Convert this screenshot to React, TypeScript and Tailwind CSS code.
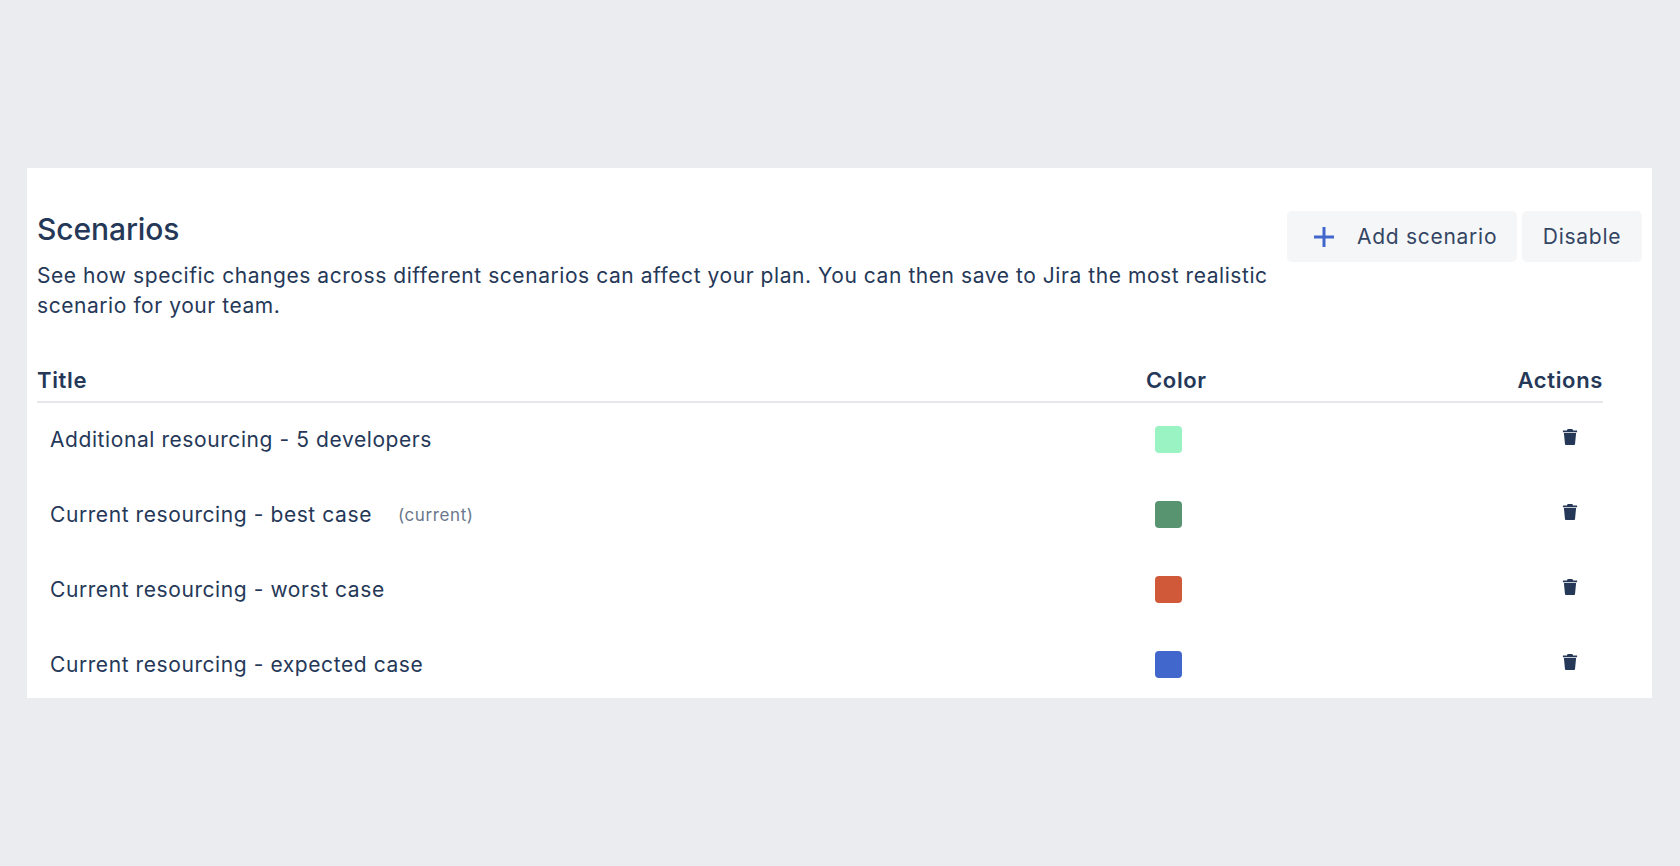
const rows = [
  { title: "Additional resourcing - 5 developers", color: "bg-[#99f3c3]" },
  { title: "Current resourcing - best case", color: "bg-[#57946f]", current: true },
  { title: "Current resourcing - worst case", color: "bg-[#d0593a]" },
  { title: "Current resourcing - expected case", color: "bg-[#4166cc]" },
];

function Trash() {
  return (
    <svg width="18" height="18" viewBox="0 0 18 18" aria-hidden="true" className="mt-[-6px] text-[#253858]">
      <path fill="currentColor" d="M6.6 1h4.800l.6 1.400h4.100v1.800H1.900V2.400h4.100z" />
      <path fill="currentColor" d="M2.900 5h12.200l-1.100 11.200c0 .5-.4.8-.9.8H4.900c-.5 0-.9-.3-.9-.8z" />
    </svg>
  );
}

export default function App() {
  return (
    <div className="min-h-[866px] bg-[#ebecf0] pt-[168px] pl-[27px] pr-[28px] font-[Inter,sans-serif] text-[#253858]">
      <div className="h-[530px] bg-white pt-[43px] pl-[10px] pr-[10px]">
        <div className="flex items-start justify-between">
          <div className="w-[1240px]">
            <h1 className="text-[30px] leading-[36px] font-medium tracking-[-0.1px]">Scenarios</h1>
            <p className="mt-[14px] text-[21px] leading-[30px] tracking-[0.56px]">
              See how specific changes across different scenarios can affect your plan. You can then save to Jira the most realistic scenario for your team.
            </p>
          </div>
          <div className="flex gap-[5px]">
            <button className="flex h-[51px] w-[230px] items-center rounded-[5px] bg-[#f5f6f7] pl-[26px] text-[21px] tracking-[0.72px] text-[#344563]">
              <svg width="22" height="22" viewBox="0 0 22 22" aria-hidden="true" className="text-[#4166cc]">
                <path fill="currentColor" d="M9.500 1h3v8.500H21v3h-8.500V21h-3v-8.500H1v-3h8.500z" />
              </svg>
              <span className="ml-[22px]">Add scenario</span>
            </button>
            <button className="h-[51px] w-[120px] rounded-[5px] bg-[#f5f6f7] text-[21px] tracking-[0.72px] text-[#344563]">Disable</button>
          </div>
        </div>

        <div className="mt-[42px] w-[1566px]">
          <div className="grid h-[40px] grid-cols-[1109px_1fr_auto] items-start border-b-2 border-[#e6e7eb] text-[22px] font-semibold leading-[34px] tracking-[0.65px]">
            <div>Title</div>
            <div>Color</div>
            <div>Actions</div>
          </div>
          <div className="mt-[-1px]">
            {rows.map((r) => (
              <div key={r.title} className="grid h-[75px] grid-cols-[1118px_1fr_auto] items-center">
                <div className="flex items-center pl-[13px] text-[21px] tracking-[0.58px]">
                  <span>{r.title}</span>
                  {r.current && <span className="ml-[26px] mt-[3px] text-[17px] tracking-[0.6px] text-[#6b778c]">(current)</span>}
                </div>
                <div className={`h-[27px] w-[27px] rounded-[4px] ${r.color}`} />
                <div className="flex pr-[24px]">
                  <Trash />
                </div>
              </div>
            ))}
          </div>
        </div>
      </div>
    </div>
  );
}
